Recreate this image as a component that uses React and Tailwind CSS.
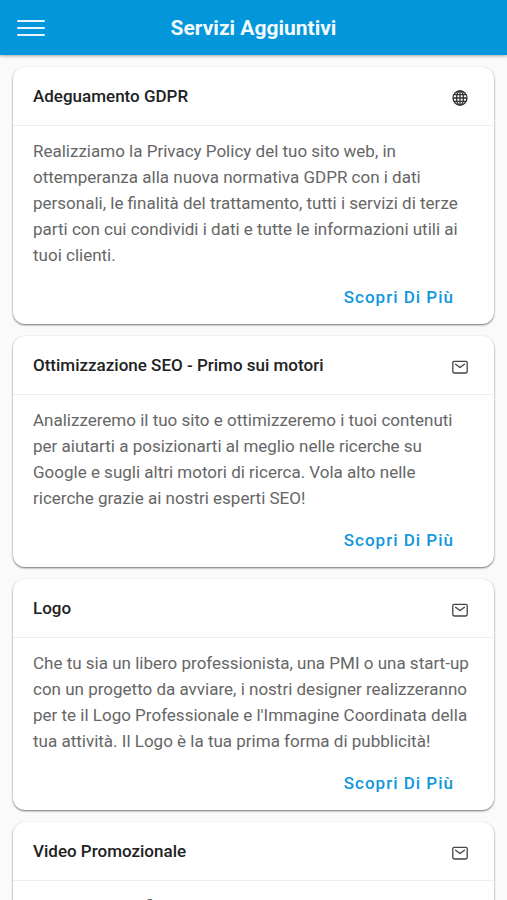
import React from "react";

const services = [
  {
    title: "Adeguamento GDPR",
    icon: "globe",
    text: "Realizziamo la Privacy Policy del tuo sito web, in ottemperanza alla nuova normativa GDPR con i dati personali, le finalità del trattamento, tutti i servizi di terze parti con cui condividi i dati e tutte le informazioni utili ai tuoi clienti.",
  },
  {
    title: "Ottimizzazione SEO - Primo sui motori",
    icon: "mail",
    text: "Analizzeremo il tuo sito e ottimizzeremo i tuoi contenuti per aiutarti a posizionarti al meglio nelle ricerche su Google e sugli altri motori di ricerca. Vola alto nelle ricerche grazie ai nostri esperti SEO!",
  },
  {
    title: "Logo",
    icon: "mail",
    text: "Che tu sia un libero professionista, una PMI o una start-up con un progetto da avviare, i nostri designer realizzeranno per te il Logo Professionale e l'Immagine Coordinata della tua attività. Il Logo è la tua prima forma di pubblicità!",
  },
  {
    title: "Video Promozionale",
    icon: "mail",
    text: "Un video di grafica animata presenta la tua azienda",
  },
];

function GlobeIcon() {
  return (
    <svg className="size-4" viewBox="0 0 16 16" fill="none" stroke="#333" strokeWidth="1.3" aria-hidden="true">
      <circle cx="8" cy="8" r="7" />
      <ellipse cx="8" cy="8" rx="3.5" ry="7" />
      <path d="M8 1v14M1 8h14M2.2 4.6h11.6M2.2 11.4h11.6" />
    </svg>
  );
}

function MailIcon() {
  return (
    <svg className="size-4" viewBox="0 0 16 16" fill="none" stroke="#444" strokeWidth="1.3" strokeLinecap="round" strokeLinejoin="round" aria-hidden="true">
      <rect x="0.8" y="2.4" width="14.4" height="11.6" rx="1.4" />
      <path d="M3.6 5.2 8 8.6 12.4 5.2" />
    </svg>
  );
}

function ServiceCard({ title, icon, text }) {
  return (
    <article className="rounded-xl bg-white shadow-[0_1px_2px_rgba(0,0,0,0.5),0_1px_3px_rgba(0,0,0,0.08)]">
      <header className="flex h-[59px] items-center justify-between border-b border-[#eeeeee] pr-[26px] pl-5">
        <h2 className="text-[17px] leading-6 font-medium text-[#222]">{title}</h2>
        <span className="pt-1">{icon === "globe" ? <GlobeIcon /> : <MailIcon />}</span>
      </header>
      <p className="px-5 pt-3 text-[17px] leading-[26px] text-[#666]">{text}</p>
      <div className="flex justify-end px-10 pt-[17px] pb-[15px]">
        <button type="button" className="text-[17px] leading-6 font-medium tracking-[1px] text-[#1197db]">
          Scopri Di Più
        </button>
      </div>
    </article>
  );
}

export default function App() {
  return (
    <div className="min-h-screen bg-[#fafafa] font-[Roboto,sans-serif]">
      <header className="grid h-[55px] grid-cols-[32px_1fr_32px] items-center bg-[#0396db] px-[15px] shadow-[0_1px_3px_rgba(0,0,0,0.35)]">
        <button type="button" aria-label="Menu" className="flex h-8 w-8 items-center justify-center text-[#e6f5fd]">
          <svg className="h-[18px] w-7" viewBox="0 0 28 18" fill="none" stroke="currentColor" strokeWidth="2" strokeLinecap="round" aria-hidden="true">
            <path d="M1 2h26M1 9h26M1 16h26" />
          </svg>
        </button>
        <h1 className="text-center text-[21px] leading-7 font-bold text-[#f2fbff]">Servizi Aggiuntivi</h1>
      </header>
      <main className="flex flex-col gap-3 px-[13px] py-3">
        {services.map((service) => (
          <ServiceCard key={service.title} {...service} />
        ))}
      </main>
    </div>
  );
}
